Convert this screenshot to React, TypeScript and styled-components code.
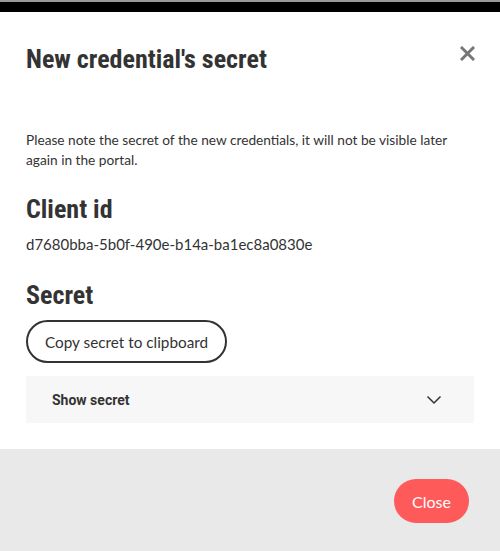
import React from "react";
import styled, { createGlobalStyle } from "styled-components";

const Global = createGlobalStyle`
  html, body { margin: 0; padding: 0; background: #ffffff; }
  body { font-family: Lato, "Open Sans", sans-serif; color: #333333; }
`;

const TopBar = styled.div`
  height: 10px;
  background: #000000;
  border-top: 2px solid #9a9a9a;
`;

const Modal = styled.div`
  display: flex;
  flex-direction: column;
  background: #ffffff;
`;

const Body = styled.div`
  padding: 32px 26px 26px 26px;
  display: flex;
  flex-direction: column;
`;

const Header = styled.div`
  display: flex;
  justify-content: space-between;
  align-items: flex-start;
`;

const Heading = styled.h2<{ $top?: number }>`
  margin: ${(p) => p.$top ?? 0}px 0 0 0;
  font-family: "Roboto Condensed", "Liberation Sans Narrow", "DejaVu Sans Condensed", Roboto, sans-serif;
  font-stretch: condensed;
  font-weight: 700;
  font-size: 26px;
  line-height: 30px;
  color: #333333;
`;

const CloseIcon = styled.button`
  border: none;
  background: none;
  padding: 0;
  margin: 0 -2px 0 0;
  width: 18px;
  height: 18px;
  display: flex;
  align-items: center;
  justify-content: center;
  cursor: pointer;
`;

const Text = styled.p<{ $top: number; $size: number }>`
  margin: ${(p) => p.$top}px 0 0 0;
  font-size: ${(p) => p.$size}px;
  line-height: 20px;
  color: #333333;
`;

const OutlineButton = styled.button`
  align-self: flex-start;
  margin-top: 10px;
  height: 43px;
  padding: 0 17px;
  border: 2px solid #333333;
  border-radius: 22px;
  background: #ffffff;
  font-family: Lato, "Open Sans", sans-serif;
  font-size: 15.3px;
  color: #333333;
`;

const Accordion = styled.div`
  margin-top: 13px;
  height: 47px;
  background: #f7f7f7;
  display: flex;
  align-items: center;
  justify-content: space-between;
  padding: 0 32px 0 26px;
`;

const AccordionLabel = styled.span`
  font-family: Roboto, "Liberation Sans", sans-serif;
  font-weight: 700;
  font-size: 14px;
  color: #333333;
`;

const Footer = styled.div`
  background: #e9e9e9;
  height: 102px;
  display: flex;
  justify-content: flex-end;
  align-items: flex-start;
  padding: 30px 31px 0 0;
  box-sizing: border-box;
`;

const PrimaryButton = styled.button`
  height: 44px;
  padding: 0 18px;
  border: none;
  border-radius: 22px;
  background: #ff5a5a;
  color: #ffffff;
  font-family: Lato, "Open Sans", sans-serif;
  font-size: 16px;
`;

export default function App() {
  return (
    <>
      <Global />
      <TopBar />
      <Modal>
        <Body>
          <Header>
            <Heading>New credential's secret</Heading>
            <CloseIcon aria-label="close">
              <svg width="15" height="15" viewBox="0 0 15 15">
                <path d="M2 2 L13 13 M13 2 L2 13" stroke="#777777" strokeWidth="3" strokeLinecap="square" />
              </svg>
            </CloseIcon>
          </Header>
          <Text $top={56} $size={13.7}>
            Please note the secret of the new credentials, it will not be visible later again in the portal.
          </Text>
          <Heading $top={24}>Client id</Heading>
          <Text $top={10} $size={15}>d7680bba-5b0f-490e-b14a-ba1ec8a0830e</Text>
          <Heading $top={26}>Secret</Heading>
          <OutlineButton>Copy secret to clipboard</OutlineButton>
          <Accordion>
            <AccordionLabel>Show secret</AccordionLabel>
            <svg width="16" height="10" viewBox="0 0 16 10">
              <path d="M1.5 1.5 L8 8 L14.5 1.5" fill="none" stroke="#333333" strokeWidth="1.5" />
            </svg>
          </Accordion>
        </Body>
        <Footer>
          <PrimaryButton>Close</PrimaryButton>
        </Footer>
      </Modal>
    </>
  );
}
